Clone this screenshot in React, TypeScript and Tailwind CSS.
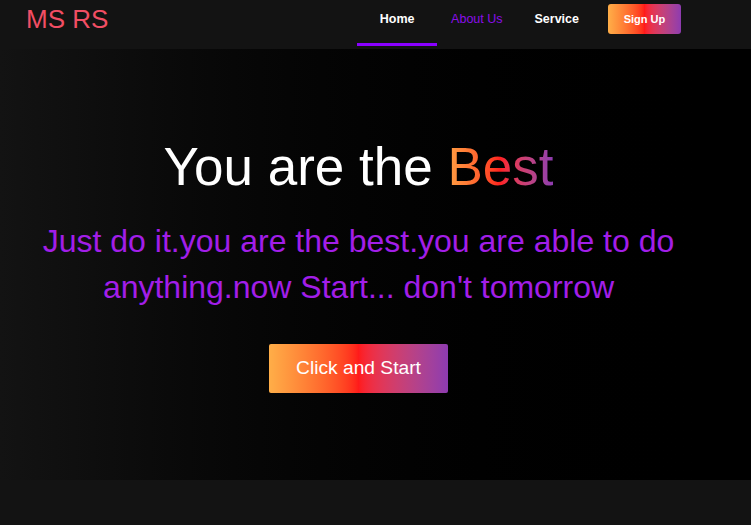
export default function App() {
  const font = { fontFamily: '"Liberation Sans", Arial, sans-serif' };

  return (
    <div className="min-h-[525px] bg-[#131313]" style={font}>
      {/* Navbar */}
      <nav className="h-[49px] flex items-start bg-[#131313]">
        <div className="pl-[26px] pt-[4px] text-[26px] leading-[30px] text-[#f24e64]">MS RS</div>
        <div className="ml-auto flex items-start mr-[70px]">
          <a className="w-[80px] h-[46px] pt-[10px] text-center text-[12.5px] font-bold text-white border-b-[3px] border-[#8a00ff]">
            Home
          </a>
          <a className="ml-[14px] pt-[10px] text-[12.5px] text-[#8a0ee8]">About Us</a>
          <a className="ml-[32px] pt-[10px] text-[12.5px] font-bold text-white">Service</a>
          <button className="ml-[29px] mt-[4px] w-[73px] h-[30px] rounded-[3px] bg-gradient-to-r from-[#ffae48] via-[#ff1a1a] to-[#8e3bb0] text-[11px] font-bold text-white">
            Sign Up
          </button>
        </div>
      </nav>

      {/* Hero */}
      <section className="h-[431px] bg-gradient-to-r from-[#131313] to-[#000000] pr-[34px] pt-[88px] flex flex-col items-center text-center">
        <h1 className="text-[53px] leading-[1.13] text-white">
          You are the{' '}
          <span className="bg-gradient-to-r from-[#ff9f43] via-[#ff1f1f] to-[#8e3bb0] bg-clip-text text-transparent">
            Best
          </span>
        </h1>
        <p className="mt-[21px] max-w-[660px] text-[32px] leading-[46px] text-[#a21ee8]">
          Just do it.you are the best.you are able to do anything.now Start... don't tomorrow
        </p>
        <button className="mt-[34px] w-[179px] h-[49px] rounded-[2px] bg-gradient-to-r from-[#ffae48] via-[#ff1a1a] to-[#8e3bb0] text-[19.2px] text-white">
          Click and Start
        </button>
      </section>
    </div>
  );
}
